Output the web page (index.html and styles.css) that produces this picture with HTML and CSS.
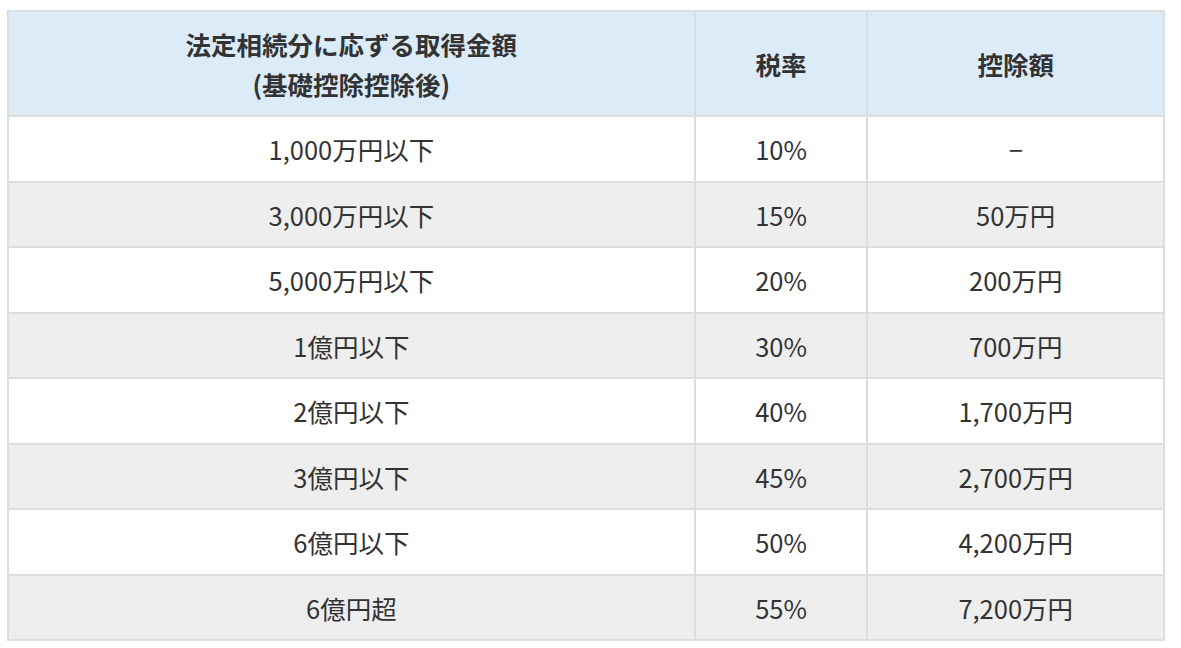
FILE: index.html
```html
<!DOCTYPE html>
<html lang="ja">
<head>
<meta charset="utf-8">
<link rel="stylesheet" href="styles.css">
</head>
<body>
<table class="tax">
  <colgroup>
    <col class="c1"><col class="c2"><col class="c3">
  </colgroup>
  <thead>
    <tr><th>法定相続分に応ずる取得金額<br>(基礎控除控除後)</th><th>税率</th><th>控除額</th></tr>
  </thead>
  <tbody>
    <tr><td>1,000万円以下</td><td>10%</td><td>−</td></tr>
    <tr><td>3,000万円以下</td><td>15%</td><td>50万円</td></tr>
    <tr><td>5,000万円以下</td><td>20%</td><td>200万円</td></tr>
    <tr><td>1億円以下</td><td>30%</td><td>700万円</td></tr>
    <tr><td>2億円以下</td><td>40%</td><td>1,700万円</td></tr>
    <tr><td>3億円以下</td><td>45%</td><td>2,700万円</td></tr>
    <tr><td>6億円以下</td><td>50%</td><td>4,200万円</td></tr>
    <tr><td>6億円超</td><td>55%</td><td>7,200万円</td></tr>
  </tbody>
</table>
</body>
</html>
```
FILE: styles.css
```css
html, body {
  margin: 0;
  padding: 0;
  background: #fff;
}
body {
  padding: 10px 0 0 7px;
  font-family: "Noto Sans CJK JP", "Noto Sans", sans-serif;
  color: #333;
}
.tax {
  border-collapse: collapse;
  width: 1158px;
  border: 2px solid #dddddd;
  font-size: 25.5px;
}
.c1 { width: 688px; }
.c2 { width: 173px; }
.c3 { width: 297px; }
.tax th, .tax td {
  border: 2px solid #dddddd;
  text-align: center;
  vertical-align: middle;
  line-height: 39.5px;
}
.tax th {
  background: #dcebf8;
  font-weight: bold;
  padding: 12px 8px;
}
.tax td {
  padding: 12px 8px;
  font-weight: normal;
}
.tax tbody tr:nth-child(even) td {
  background: #eeeeee;
}
```
